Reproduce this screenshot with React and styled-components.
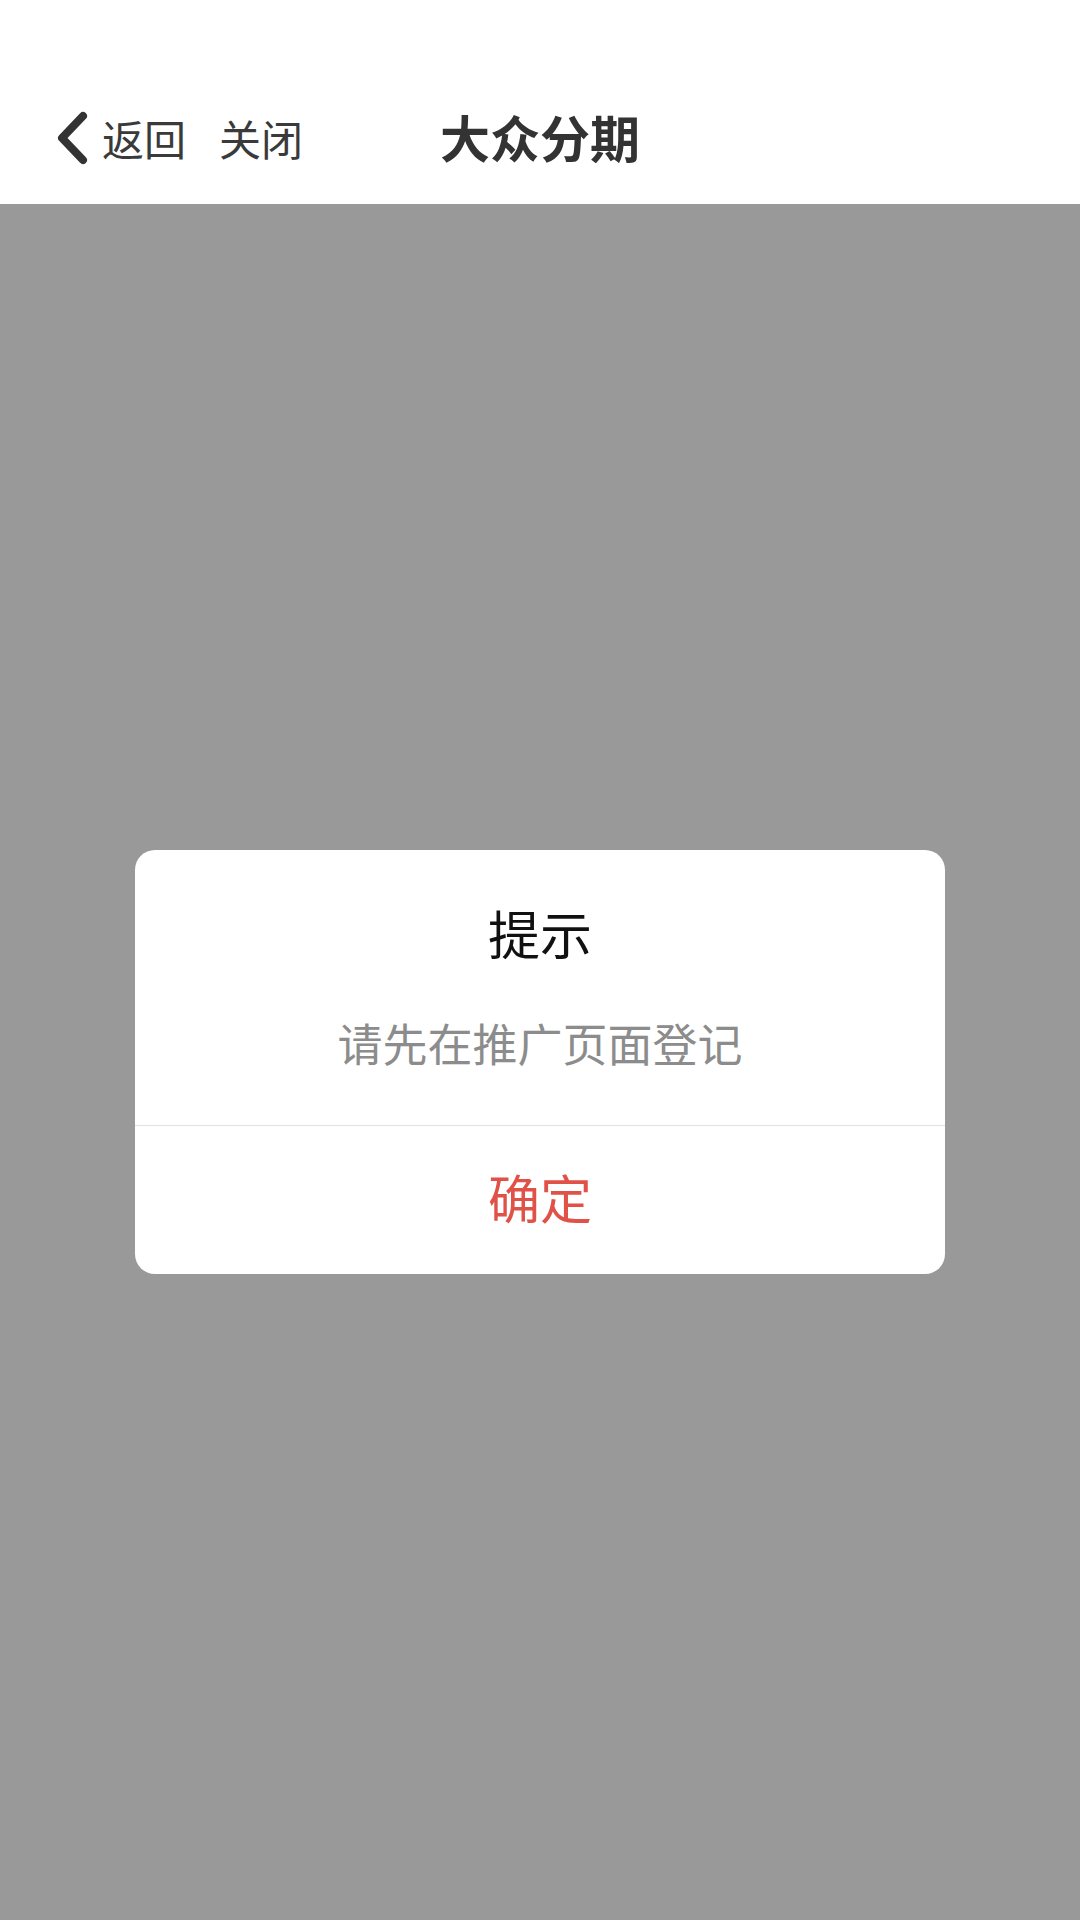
import React from 'react'
import styled, { createGlobalStyle } from 'styled-components'

const GlobalStyle = createGlobalStyle`
  html, body {
    margin: 0;
    padding: 0;
    background: #999999;
  }
  body {
    font-family: "Noto Sans CJK SC", "Noto Sans", sans-serif;
  }
`

const BackIcon = () => (
  <svg width='32' height='54' viewBox='0 0 32 54' fill='none'>
    <path
      d='M27 5 L6 27 L27 49'
      stroke='#333333'
      strokeWidth='8'
      strokeLinecap='round'
      strokeLinejoin='round'
    />
  </svg>
)

const App = () => {
  return (
    <Page>
      <GlobalStyle />
      <Header>
        <StatusBar />
        <NavBar>
          <NavLeft>
            <BackButton>
              <BackIcon />
              <NavText>返回</NavText>
            </BackButton>
            <NavText>关闭</NavText>
          </NavLeft>
          <NavTitle>大众分期</NavTitle>
          <span />
        </NavBar>
      </Header>
      <Mask>
        <Dialog>
          <DialogBody>
            <DialogTitle>提示</DialogTitle>
            <DialogMessage>请先在推广页面登记</DialogMessage>
          </DialogBody>
          <DialogButton>确定</DialogButton>
        </Dialog>
      </Mask>
    </Page>
  )
}

export default App

// STYLING
const Page = styled.div`
  width: 1080px;
  height: 1920px;
  display: flex;
  flex-direction: column;
  overflow: hidden;
`

const Header = styled.header`
  height: 204px;
  background: #ffffff;
  display: flex;
  flex-direction: column;
  flex-shrink: 0;
`

const StatusBar = styled.div`
  height: 72px;
`

const NavBar = styled.nav`
  flex: 1;
  display: grid;
  grid-template-columns: 1fr auto 1fr;
  align-items: center;
  padding: 0 56px;
`

const NavLeft = styled.div`
  display: flex;
  align-items: center;
  gap: 33px;
`

const BackButton = styled.div`
  display: flex;
  align-items: center;
  gap: 14px;
`

const NavText = styled.span`
  font-size: 42px;
  line-height: 54px;
  color: #3a3a3a;
`

const NavTitle = styled.h1`
  margin: 0 0 4px;
  font-size: 50px;
  line-height: 60px;
  font-weight: 700;
  color: #333333;
`

const Mask = styled.main`
  flex: 1;
  background: #999999;
  display: flex;
  align-items: center;
  justify-content: center;
`

const Dialog = styled.div`
  width: 810px;
  background: #ffffff;
  border-radius: 20px;
  overflow: hidden;
  display: flex;
  flex-direction: column;
`

const DialogBody = styled.div`
  display: flex;
  flex-direction: column;
  align-items: center;
  padding: 52px 40px 55px;
  border-bottom: 1px solid #e2e2e2;
`

const DialogTitle = styled.div`
  font-size: 52px;
  line-height: 62px;
  color: #111111;
`

const DialogMessage = styled.div`
  margin-top: 52px;
  font-size: 45px;
  line-height: 54px;
  color: #8c8c8c;
`

const DialogButton = styled.div`
  height: 140px;
  padding-bottom: 8px;
  display: flex;
  align-items: center;
  justify-content: center;
  font-size: 52px;
  color: #e05248;
`
